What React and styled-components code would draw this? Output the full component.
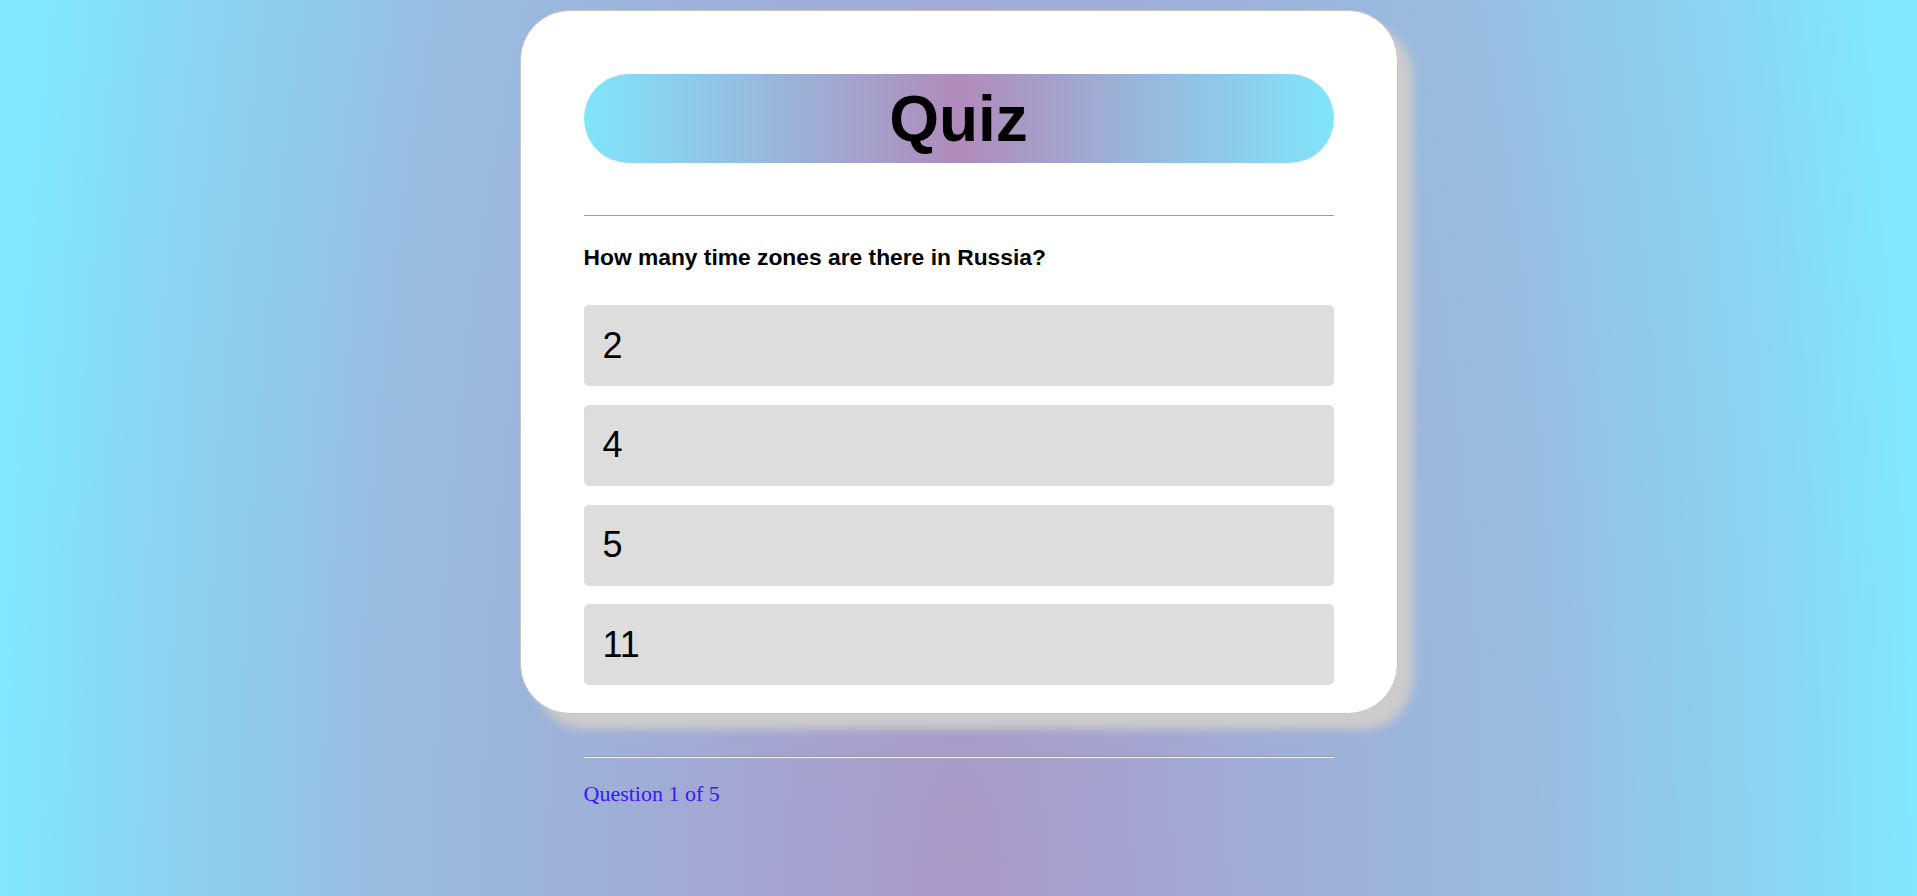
import React from "react";
import styled, { createGlobalStyle } from "styled-components";

const GlobalStyle = createGlobalStyle`
  html, body {
    margin: 0;
    padding: 0;
  }
  body {
    font-family: "Liberation Sans", Arial, sans-serif;
  }
`;

const Page = styled.div`
  min-height: 100vh;
  box-sizing: border-box;
  padding-top: 10px;
  display: flex;
  flex-direction: column;
  align-items: center;
  background: radial-gradient(
    ellipse 960px 2900px at 50% 100%,
    #aa98c7 0%,
    #a0acd6 31%,
    #98bce0 60%,
    #88d8f4 88%,
    #80e8fe 100%
  );
`;

const Card = styled.main`
  width: 878px;
  box-sizing: border-box;
  background: #ffffff;
  border: 1px solid #c6c6c6;
  border-radius: 50px;
  box-shadow: 15px 15px 10px #cccccc;
  padding: 63px 63px 27.5px;
`;

const Title = styled.h1`
  margin: 0;
  height: 89px;
  border-radius: 45px;
  background: linear-gradient(to right, #80e5fb 0%, #b08abb 50%, #80e5fb 100%);
  display: flex;
  align-items: center;
  justify-content: center;
  font-family: "Liberation Sans", Arial, sans-serif;
  font-weight: 700;
  font-size: 64px;
  color: #000;
`;

const Rule = styled.hr`
  margin: ${(p) => p.$top || 0}px 0 0;
  height: 0;
  border: none;
  border-top: 1px solid #9c9c9c;
  border-bottom: 1px solid ${(p) => (p.$light ? "#f2f2f2" : "#ffffff")};
`;

const Question = styled.h2`
  margin: 27.4px 0 34px;
  font-family: "Liberation Sans", Arial, sans-serif;
  font-weight: 700;
  font-size: 22.8px;
  line-height: normal;
  color: #000;
`;

const OptionList = styled.div`
  display: flex;
  flex-direction: column;
  gap: 18.6px;
`;

const Option = styled.div`
  height: 81px;
  box-sizing: border-box;
  background: #dddddd;
  border-radius: 5px;
  padding-left: 19px;
  display: flex;
  align-items: center;
  font-family: "Liberation Sans", Arial, sans-serif;
  font-size: 36px;
  color: #000;
  cursor: pointer;
`;

const Footer = styled.footer`
  width: 750px;
  margin-top: 42.5px;
`;

const Progress = styled.p`
  margin: 23px 0 0;
  font-family: "Liberation Serif", "Times New Roman", serif;
  font-size: 22px;
  line-height: normal;
  color: #3a14ff;
`;

const options = ["2", "4", "5", "11"];

export default function App() {
  return (
    <>
      <GlobalStyle />
      <Page>
        <Card>
          <Title>Quiz</Title>
          <Rule $top={52} />
          <Question>How many time zones are there in Russia?</Question>
          <OptionList>
            {options.map((o) => (
              <Option key={o}>{o}</Option>
            ))}
          </OptionList>
        </Card>
        <Footer>
          <Rule $light />
          <Progress>Question 1 of 5</Progress>
        </Footer>
      </Page>
    </>
  );
}
